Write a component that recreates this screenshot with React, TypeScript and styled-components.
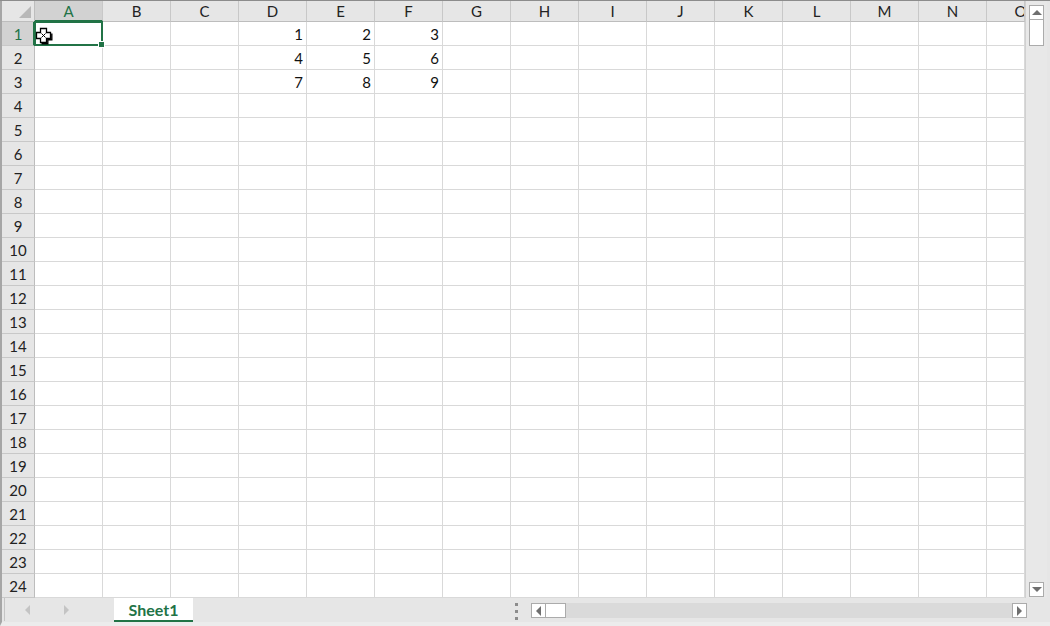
import React from "react";
import styled, { createGlobalStyle, css } from "styled-components";

const Global = createGlobalStyle`
  html, body { margin: 0; padding: 0; background: #e6e6e6; }
  body { font-family: "Lato", "Open Sans", sans-serif; }
`;

const GREEN = "#217346";
const COLS = ["A", "B", "C", "D", "E", "F", "G", "H", "I", "J", "K", "L", "M", "N", "O"];
const DATA: Record<number, Record<string, number>> = {
  1: { D: 1, E: 2, F: 3 },
  2: { D: 4, E: 5, F: 6 },
  3: { D: 7, E: 8, F: 9 },
};

const Window = styled.div`
  width: 1050px;
  height: 626px;
  display: flex;
  flex-direction: column;
  background: #e6e6e6;
  border-top: 1px solid #8c8c8c;
  box-sizing: border-box;
  overflow: hidden;
`;

const Main = styled.div`
  display: flex;
  height: 597px;
  border-left: 2px solid #a6a6a6;
`;

const Grid = styled.div`
  width: 1023px;
  display: grid;
  grid-template-columns: 33px repeat(14, 68px) 38px;
  grid-template-rows: 21px repeat(24, 24px);
  background: #fff;
  overflow: hidden;
  font-size: 15px;
  color: #111;
`;

const Corner = styled.div`
  background: #e6e6e6;
  border-right: 1px solid #bdbdbd;
  border-bottom: 1px solid #bdbdbd;
  box-sizing: border-box;
  position: relative;
  &::after {
    content: "";
    position: absolute;
    right: 3px;
    bottom: 3px;
    width: 0;
    height: 0;
    border-left: 12px solid transparent;
    border-bottom: 12px solid #b8b8b8;
  }
`;

const ColHead = styled.div<{ $sel?: boolean }>`
  background: #e6e6e6;
  border-right: 1px solid #c8c8c8;
  border-bottom: 1px solid #bdbdbd;
  box-sizing: border-box;
  display: flex;
  align-items: center;
  justify-content: flex-start;
  color: #222;
  line-height: 1;
  overflow: hidden;
  white-space: nowrap;
  ${(p) =>
    p.$sel &&
    css`
      background: #d2d2d2;
      color: ${GREEN};
      border-bottom: 2px solid ${GREEN};
      padding-top: 1px;
    `}
`;

const ColLabel = styled.span`
  flex: 0 0 67px;
  text-align: center;
`;

const RowHead = styled.div<{ $sel?: boolean }>`
  background: #e6e6e6;
  border-right: 1px solid #bdbdbd;
  border-bottom: 1px solid #c8c8c8;
  box-sizing: border-box;
  display: flex;
  align-items: center;
  justify-content: center;
  color: #222;
  ${(p) =>
    p.$sel &&
    css`
      background: #d2d2d2;
      color: ${GREEN};
      border-right: 2px solid ${GREEN};
      padding-left: 1px;
    `}
`;

const Cell = styled.div<{ $sel?: boolean }>`
  border-right: 1px solid #d9d9d9;
  border-bottom: 1px solid #d9d9d9;
  box-sizing: border-box;
  display: flex;
  align-items: center;
  justify-content: flex-end;
  padding-right: 3px;
  padding-top: 1px;
  position: relative;
  ${(p) =>
    p.$sel &&
    css`
      &::before {
        content: "";
        position: absolute;
        left: -1px;
        top: -1px;
        right: -1px;
        bottom: -1px;
        border: 2px solid ${GREEN};
        z-index: 2;
      }
      &::after {
        content: "";
        position: absolute;
        right: -3px;
        bottom: -3px;
        width: 5px;
        height: 5px;
        background: ${GREEN};
        border: 1px solid #fff;
        z-index: 3;
      }
    `}
`;

const CursorIcon = styled.svg`
  position: absolute;
  left: 0px;
  top: 5px;
  z-index: 4;
`;

const VScroll = styled.div`
  width: 22px;
  display: flex;
  flex-direction: column;
  align-items: center;
  padding-top: 4px;
  padding-bottom: 1px;
  box-sizing: border-box;
  background: #e8e8e8;
  border-left: 1px solid #d0d0d0;
`;

const ScrollBtn = styled.div`
  width: 15px;
  height: 15px;
  box-sizing: border-box;
  background: #fff;
  border: 1px solid #ababab;
  display: flex;
  align-items: center;
  justify-content: center;
  flex-shrink: 0;
`;

const Thumb = styled.div<{ $vertical?: boolean }>`
  box-sizing: border-box;
  background: #fff;
  border: 1px solid #ababab;
  flex-shrink: 0;
  ${(p) =>
    p.$vertical
      ? css`
          width: 15px;
          height: 27px;
          margin-top: -1px;
        `
      : css`
          width: 21px;
          height: 15px;
          margin-left: -1px;
        `}
`;

const Track = styled.div`
  flex: 1;
`;

const Arrow = styled.div<{ $dir: "up" | "down" | "left" | "right"; $color?: string }>`
  width: 0;
  height: 0;
  ${(p) => {
    const c = p.$color ?? "#6f6f6f";
    switch (p.$dir) {
      case "up":
        return css`border-left: 5px solid transparent; border-right: 5px solid transparent; border-bottom: 5px solid ${c};`;
      case "down":
        return css`border-left: 5px solid transparent; border-right: 5px solid transparent; border-top: 5px solid ${c};`;
      case "left":
        return css`border-top: 5px solid transparent; border-bottom: 5px solid transparent; border-right: 5px solid ${c};`;
      default:
        return css`border-top: 5px solid transparent; border-bottom: 5px solid transparent; border-left: 5px solid ${c};`;
    }
  }}
`;

const BottomBar = styled.div`
  flex: 1;
  display: flex;
  align-items: flex-start;
  background: #e6e6e6;
  border-left: 2px solid #a6a6a6;
  border-bottom: 4px solid #ececec;
  box-sizing: border-box;
`;

const TabNav = styled.div`
  width: 110px;
  height: 23px;
  display: flex;
  align-items: center;
  padding-left: 20px;
  gap: 34px;
  box-sizing: border-box;
  border-left: 1px solid #c4c4c4;
  margin-left: 2px;
`;

const SheetTab = styled.div`
  width: 79px;
  height: 24px;
  box-sizing: border-box;
  background: #fff;
  border-bottom: 2px solid ${GREEN};
  color: ${GREEN};
  font-weight: bold;
  font-size: 16px;
  display: flex;
  align-items: center;
  justify-content: center;
  padding-top: 1px;
`;

const Spacer = styled.div`
  flex: 1;
`;

const Splitter = styled.div`
  width: 3px;
  display: flex;
  flex-direction: column;
  gap: 4px;
  margin: 5px 13px 0 0;
`;

const Dot = styled.span`
  width: 3px;
  height: 3px;
  background: #8c8c8c;
`;

const HScroll = styled.div`
  width: 496px;
  height: 15px;
  margin-top: 5px;
  display: flex;
  align-items: center;
  background: #dadada;
`;

const RightPad = styled.div`
  width: 23px;
`;

function Cursor() {
  return (
    <CursorIcon width="19" height="19" viewBox="0 0 19 19">
      <path
        d="M5.5 1.5 H11.5 V5.5 H15.5 V11.5 H11.5 V15.5 H5.5 V11.5 H1.5 V5.5 H5.5 Z"
        fill="#fff"
        stroke="#000"
        strokeWidth="1.3"
      />
      <path d="M6.5 16.8 H12.8 V12.8 H16.8 V6.5" fill="none" stroke="#000" strokeWidth="1.4" />
      <path d="M6.5 6.5 L10.5 10.5 M10.5 6.5 L6.5 10.5" stroke="#000" strokeWidth="1" />
    </CursorIcon>
  );
}

export default function App() {
  const rows = Array.from({ length: 24 }, (_, i) => i + 1);
  return (
    <>
      <Global />
      <Window>
        <Main>
          <Grid>
            <Corner />
            {COLS.map((c) => (
              <ColHead key={c} $sel={c === "A"}>
                <ColLabel>{c}</ColLabel>
              </ColHead>
            ))}
            {rows.map((r) => (
              <React.Fragment key={r}>
                <RowHead $sel={r === 1}>{r}</RowHead>
                {COLS.map((c) => {
                  const sel = r === 1 && c === "A";
                  return (
                    <Cell key={c} $sel={sel}>
                      {sel && <Cursor />}
                      {DATA[r]?.[c] ?? ""}
                    </Cell>
                  );
                })}
              </React.Fragment>
            ))}
          </Grid>
          <VScroll>
            <ScrollBtn>
              <Arrow $dir="up" />
            </ScrollBtn>
            <Thumb $vertical />
            <Track />
            <ScrollBtn>
              <Arrow $dir="down" />
            </ScrollBtn>
          </VScroll>
        </Main>
        <BottomBar>
          <TabNav>
            <Arrow $dir="left" $color="#c4c4c4" />
            <Arrow $dir="right" $color="#c4c4c4" />
          </TabNav>
          <SheetTab>Sheet1</SheetTab>
          <Spacer />
          <Splitter>
            <Dot />
            <Dot />
            <Dot />
          </Splitter>
          <HScroll>
            <ScrollBtn>
              <Arrow $dir="left" />
            </ScrollBtn>
            <Thumb />
            <Track />
            <ScrollBtn>
              <Arrow $dir="right" />
            </ScrollBtn>
          </HScroll>
          <RightPad />
        </BottomBar>
      </Window>
    </>
  );
}
